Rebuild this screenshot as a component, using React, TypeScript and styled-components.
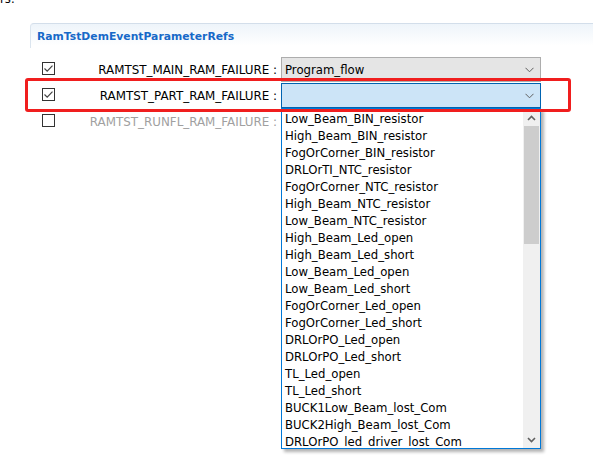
import React from "react";
import styled, { createGlobalStyle } from "styled-components";

const Global = createGlobalStyle`
  html, body { margin: 0; padding: 0; background: #fff; }
  body { font-family: "DejaVu Sans", "Noto Sans CJK SC", sans-serif; font-size: 11.7px; color: #000; overflow: hidden; }
`;

const Page = styled.div`
  width: 593px;
  height: 464px;
  position: relative;
  overflow: hidden;
`;

const CutText = styled.div`
  margin-top: -8px;
  height: 14px;
  line-height: 14px;
`;

const Section = styled.div`
  position: relative;
  margin-top: 17px;
  margin-left: 30px;
`;

const Header = styled.div`
  height: 24px;
  border-top: 1px solid #d3deea;
  border-left: 1px solid #dbe5ef;
  border-top-left-radius: 4px;
  background: linear-gradient(#eef4fa, #ffffff 90%);
  padding-left: 6px;
  display: flex;
  align-items: center;
`;

const Title = styled.span`
  font-weight: bold;
  color: #1769c8;
  font-size: 10.8px;
`;

const Rows = styled.div`
  display: grid;
  grid-template-columns: 13px 226px 260px;
  row-gap: 1px;
  margin-top: 9px;
  padding-left: 12px;
`;

const Row = styled.div`
  display: contents;
`;

const Check = styled.div`
  width: 11px;
  height: 11px;
  border: 1px solid #333;
  background: #fff;
  align-self: center;
  margin-top: -3px;
  display: flex;
  align-items: center;
  justify-content: center;
`;

const Label = styled.div<{ $disabled?: boolean }>`
  text-align: right;
  padding-right: 4px;
  align-self: center;
  font-size: 11.9px;
  color: ${(p) => (p.$disabled ? "#a0a0a0" : "#000")};
  white-space: nowrap;
`;

const ComboWrap = styled.div`
  position: relative;
  height: 25px;
`;

const Combo = styled.div<{ $focused?: boolean }>`
  box-sizing: border-box;
  height: 25px;
  border: 1px solid ${(p) => (p.$focused ? "#0063b1" : "#adadad")};
  background: ${(p) => (p.$focused ? "#cce4f7" : "#e5e5e5")};
  display: flex;
  align-items: center;
  padding-left: 3px;
  padding-right: 6px;
`;

const ComboText = styled.span`
  flex: 1;
`;

const Chevron = () => (
  <svg width="9" height="6" viewBox="0 0 9 6">
    <path d="M0.5 0.8 L4.5 4.8 L8.5 0.8" fill="none" stroke="#606060" strokeWidth="1" />
  </svg>
);

const Tick = () => (
  <svg width="11" height="11" viewBox="0 0 11 11">
    <path d="M1.5 5.5 L4.2 8.2 L9.5 2.6" fill="none" stroke="#444" strokeWidth="1.2" />
  </svg>
);

const Dropdown = styled.div`
  position: absolute;
  left: 0;
  top: 25px;
  width: 260px;
  height: 341px;
  box-sizing: border-box;
  border: 1px solid #0078d7;
  background: #fff;
  box-shadow: 3px 3px 3px rgba(0, 0, 0, 0.3);
  display: flex;
  z-index: 2;
`;

const List = styled.div`
  flex: 1;
  padding-left: 3px;
  padding-top: 2px;
  overflow: hidden;
`;

const Item = styled.div`
  height: 17px;
  line-height: 17px;
  white-space: nowrap;
`;

const ScrollBar = styled.div`
  width: 17px;
  background: #f0f0f0;
  display: flex;
  flex-direction: column;
`;

const ScrollBtn = styled.div`
  height: 17px;
  display: flex;
  align-items: center;
  justify-content: center;
`;

const Thumb = styled.div`
  height: 118px;
  margin: 0 1px;
  background: #cdcdcd;
`;

const Track = styled.div`
  flex: 1;
`;

const Arrow = ({ up }: { up?: boolean }) => (
  <svg width="9" height="6" viewBox="0 0 9 6">
    <path
      d={up ? "M1 5 L4.5 1.5 L8 5" : "M1 1 L4.5 4.5 L8 1"}
      fill="none"
      stroke="#606060"
      strokeWidth="1.6"
    />
  </svg>
);

const Annotation = styled.div`
  position: absolute;
  left: -5px;
  top: 55px;
  width: 546px;
  height: 34px;
  box-sizing: border-box;
  border: 3px solid #f01e1e;
  border-radius: 3px;
  pointer-events: none;
  z-index: 3;
`;

const items = [
  "Low_Beam_BIN_resistor",
  "High_Beam_BIN_resistor",
  "FogOrCorner_BIN_resistor",
  "DRLOrTI_NTC_resistor",
  "FogOrCorner_NTC_resistor",
  "High_Beam_NTC_resistor",
  "Low_Beam_NTC_resistor",
  "High_Beam_Led_open",
  "High_Beam_Led_short",
  "Low_Beam_Led_open",
  "Low_Beam_Led_short",
  "FogOrCorner_Led_open",
  "FogOrCorner_Led_short",
  "DRLOrPO_Led_open",
  "DRLOrPO_Led_short",
  "TL_Led_open",
  "TL_Led_short",
  "BUCK1Low_Beam_lost_Com",
  "BUCK2High_Beam_lost_Com",
  "DRLOrPO_led_driver_lost_Com",
];

export default function App() {
  return (
    <Page>
      <Global />
      <CutText>rs.</CutText>
      <Section>
        <Header>
          <Title>RamTstDemEventParameterRefs</Title>
        </Header>
        <Rows>
          <Row>
            <Check>
              <Tick />
            </Check>
            <Label>RAMTST_MAIN_RAM_FAILURE :</Label>
            <ComboWrap>
              <Combo>
                <ComboText>Program_flow</ComboText>
                <Chevron />
              </Combo>
            </ComboWrap>
          </Row>
          <Row>
            <Check>
              <Tick />
            </Check>
            <Label>RAMTST_PART_RAM_FAILURE :</Label>
            <ComboWrap>
              <Combo $focused>
                <ComboText />
                <Chevron />
              </Combo>
              <Dropdown>
                <List>
                  {items.map((t) => (
                    <Item key={t}>{t}</Item>
                  ))}
                </List>
                <ScrollBar>
                  <ScrollBtn>
                    <Arrow up />
                  </ScrollBtn>
                  <Thumb />
                  <Track />
                  <ScrollBtn>
                    <Arrow />
                  </ScrollBtn>
                </ScrollBar>
              </Dropdown>
            </ComboWrap>
          </Row>
          <Row>
            <Check />
            <Label $disabled>RAMTST_RUNFL_RAM_FAILURE :</Label>
            <ComboWrap>
              <Combo>
                <ComboText />
                <Chevron />
              </Combo>
            </ComboWrap>
          </Row>
        </Rows>
        <Annotation />
      </Section>
    </Page>
  );
}
